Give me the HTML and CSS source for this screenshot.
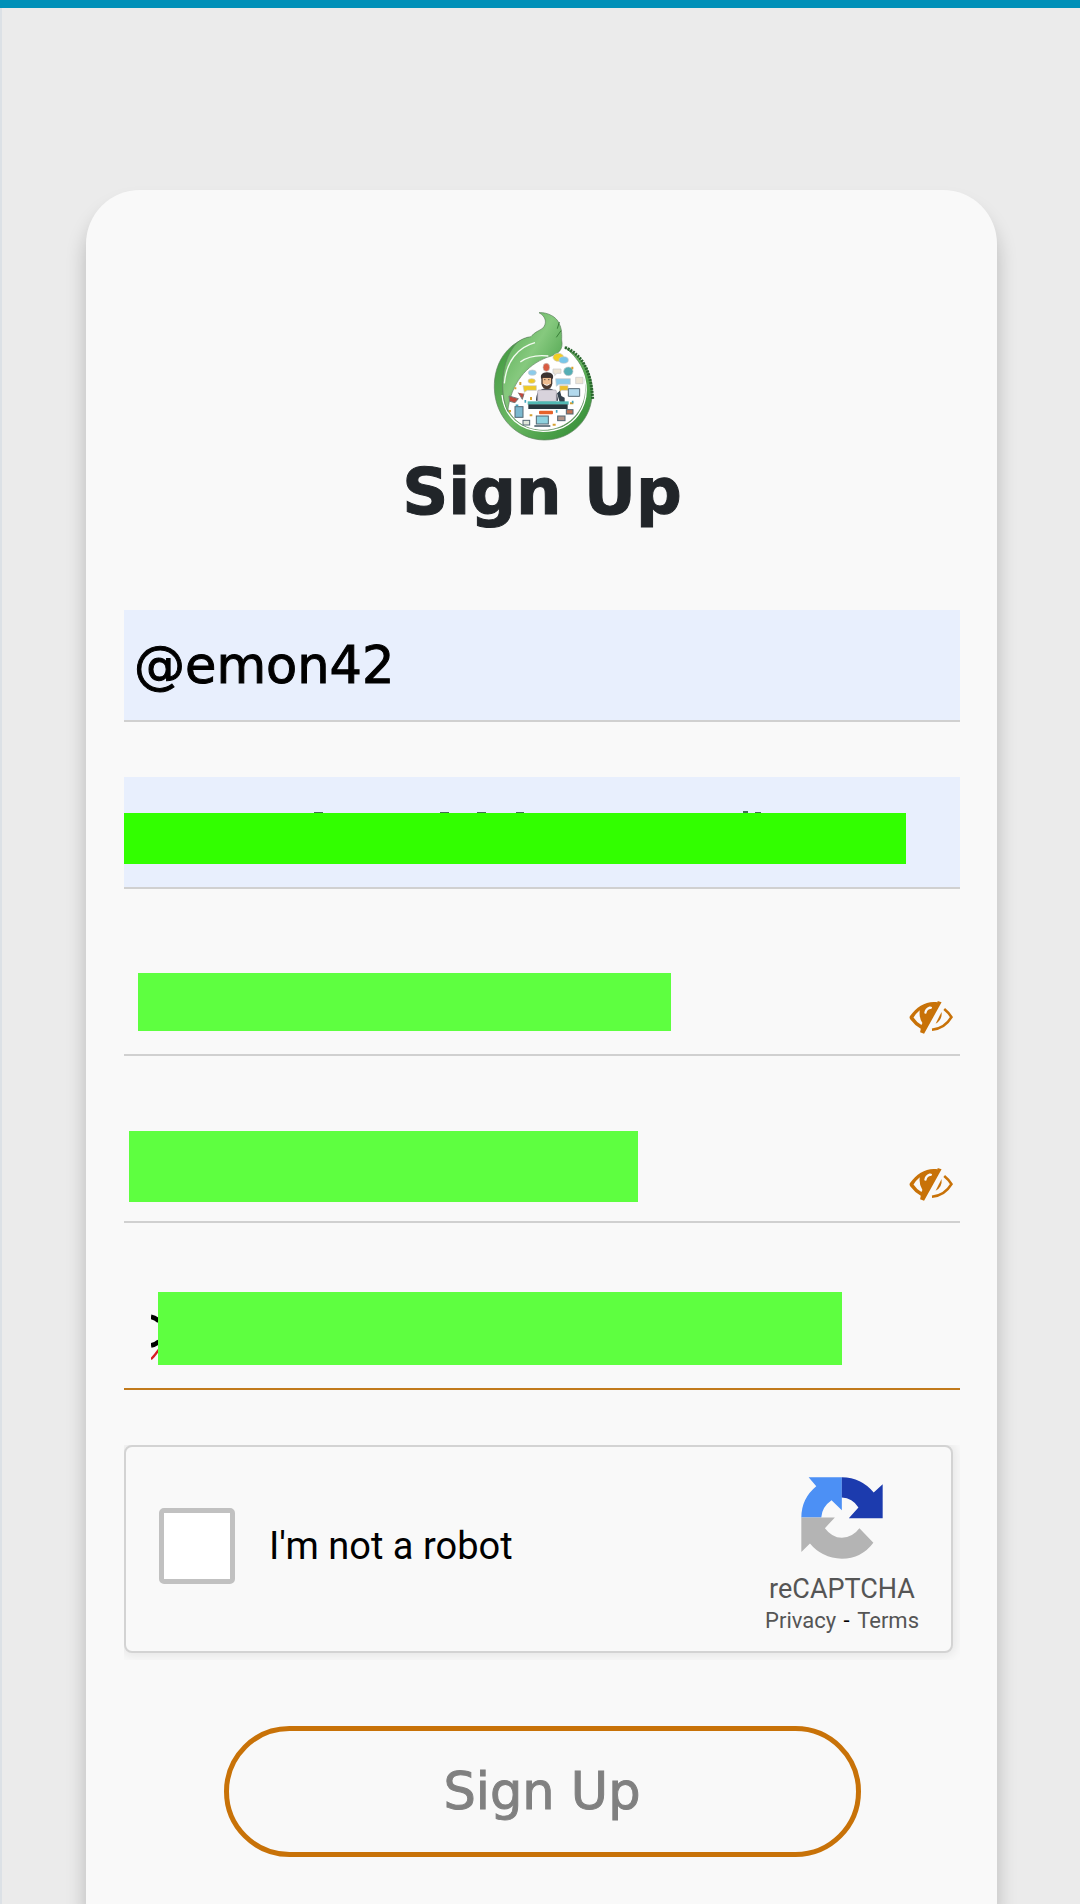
FILE: index.html
```html
<!DOCTYPE html>
<html lang="en">
<head>
  <meta charset="UTF-8">
  <meta name="viewport" content="width=device-width, initial-scale=1.0">
  <title>Sign Up</title>
  <link rel="stylesheet" href="styles.css">
</head>
<body>
  <main class="page">
    <form class="card">
      <svg class="logo" viewBox="-8 0 390 450" role="img" aria-label="Logo">
        <defs>
          <linearGradient id="leaf" x1="0" y1="0" x2="1" y2="1">
            <stop offset="0" stop-color="#4fa64c"/>
            <stop offset="0.45" stop-color="#86c97e"/>
            <stop offset="1" stop-color="#2f8f33"/>
          </linearGradient>
          <linearGradient id="ring" x1="0" y1="0" x2="1" y2="1">
            <stop offset="0" stop-color="#3d963c"/>
            <stop offset="0.5" stop-color="#6cb864"/>
            <stop offset="1" stop-color="#2a862e"/>
          </linearGradient>
        </defs>
        <circle cx="194" cy="270" r="140" fill="#fff"/>
        <path d="M148 112C82 130 42 190 44 264C46 350 110 419 194 420C278 420 338 356 338 274C338 216 306 166 255 142C298 174 318 214 318 264C318 334 264 391 190 391C116 390 70 336 70 264C68 202 92 150 148 112Z" fill="url(#ring)" stroke="#5d805d" stroke-width="2"/>
        <path d="M252 150C320 190 340 280 296 344C270 380 230 394 190 394C120 391 74 350 67 285" fill="none" stroke="#fff" stroke-width="4"/>
        <path d="M178 38C204 36 232 52 238 70C248 88 246 108 246 120C252 150 236 164 202 172C140 196 94 250 84 334C60 280 62 180 112 128C124 118 138 112 154 110C164 96 180 92 190 84C202 70 200 50 178 38Z" fill="url(#leaf)" stroke="#5d805d" stroke-width="2"/>
        <path d="M166 128C114 142 80 184 74 250M206 168C170 164 146 168 122 186" fill="none" stroke="#f2faef" stroke-width="4"/>
        <path d="M239 66L233 86M244 92L230 112" stroke="#397e38" stroke-width="3"/>
        <path d="M256 142C306 164 334 208 339 298" fill="none" stroke="#29672d" stroke-width="9" stroke-dasharray="6 3"/>
        <!-- chat bubbles -->
        <g stroke="#c8c8c8" stroke-width="2">
          <ellipse cx="236" cy="172" rx="16" ry="12" fill="#f3cf22"/>
          <ellipse cx="252" cy="180" rx="14" ry="10" fill="#79c6e8"/>
          <ellipse cx="200" cy="202" rx="10" ry="12" fill="#d95b42"/>
          <ellipse cx="158" cy="218" rx="12" ry="8" fill="#8ccbea"/>
          <ellipse cx="156" cy="243" rx="11" ry="7" fill="#f0ca26"/>
          <ellipse cx="266" cy="214" rx="14" ry="13" fill="#55aeb5"/>
          <path d="M220 207h24v13h-12l-7 7v-7h-5zM288 232h22v19h-22z" fill="#eee5d5"/>
          <path d="M228 236h44v17h-34l-8 6z" fill="#8ccbea"/>
          <path d="M130 257h40v14h-27l-9 6z" fill="#f0ca26"/>
          <path d="M240 257h25v14h-20l-5 5z" fill="#edc02b"/>
        </g>
        <!-- gadgets -->
        <g stroke="#536773" stroke-width="3">
          <rect x="106" y="320" width="24" height="32" fill="#7bb8cf"/>
          <rect x="170" y="348" width="36" height="24" fill="#8fd2df"/>
          <path d="M164 378h48" stroke-width="5"/>
          <rect x="130" y="361" width="20" height="14" fill="#dfe7da"/>
          <rect x="234" y="348" width="22" height="14" fill="#b29387"/>
          <rect x="260" y="329" width="20" height="13" fill="#c07153"/>
          <path d="M266 266h34v23h-34z" fill="#b2d9ed"/>
        </g>
        <path d="M88 288l28 8-10 12-16-4zM116 278l12 20 5-17" fill="#c0483b" stroke="#777" stroke-width="3"/>
        <rect x="178" y="332" width="42" height="11" rx="3" fill="#e6632b"/>
        <path d="M122 246v9M107 262v6M271 310h10M150 346h8M219 374h9M91 330v7M278 200v8M154 291v9" stroke="#d4a130" stroke-width="6"/>
        <path d="M137 300v8M279 302v8M231 330v8M108 316h8" stroke="#45a3bd" stroke-width="5"/>
        <!-- man at the desk -->
        <path d="M169 302C170 278 178 266 202 265C226 266 233 278 235 302Z" fill="#2e3545"/>
        <path d="M185 225h33v26q-3 15-16 17q-14-2-17-17z" fill="#4b3930"/>
        <path d="M189 234h25v17q-12 8-25 0z" fill="#eebd91"/>
        <path d="M184 237q-4-20 18-20t18 20l-8-6h-22z" fill="#3b3331"/>
        <path d="M194 253q8 6 15 0" fill="none" stroke="#fff" stroke-width="3"/>
        <path d="M194 239h3M206 239h3" stroke="#2c2929" stroke-width="3"/>
        <rect x="174" y="270" width="56" height="35" rx="4" fill="#d8d3dc" stroke="#aaa6b0" stroke-width="2"/>
        <path d="M232 280l9-8 4 16 10 5v13h-15z" fill="#33414d"/>
        <rect x="144" y="304" width="123" height="10" fill="#52b9b4"/>
        <rect x="146" y="313" width="118" height="14" fill="#27373e"/>
      </svg>
      <h1 class="title">Sign Up</h1>

      <div class="field">
        <input class="filled" type="text" value="@emon42" aria-label="Username">
      </div>
      <div class="field">
        <input class="filled" type="email" aria-label="Email">
        <svg class="specks" viewBox="0 0 640 4" aria-hidden="true">
          <path d="M190 2h9M316 2h9M353 2h9M392 2h8M619 1h5M631 2h6" stroke="#456b55" stroke-width="2"/>
        </svg>
        <span class="mask mask-email"></span>
      </div>
      <div class="field">
        <input type="password" aria-label="Password">
        <span class="mask mask-password"></span>
        <button class="eye" type="button" aria-label="Show password">
          <svg viewBox="0 0 132 100">
            <path d="M86 4C55-2 23 16 3 45Q-1 50 3 55Q17 74 35 84L33 95L45 99L98 4L86 0ZM32 28Q29 50 40 67L37 73Q23 65 13 50Q20 38 32 28ZM61 17Q48 22 46 34Q45 39 49 39Q53 39 53 34Q55 25 65 24Q70 23 69 19Q67 16 61 17Z" fill="#c87208" fill-rule="evenodd"/>
            <path d="M106 24Q120 35 128 49Q107 84 69 87" fill="none" stroke="#c87208" stroke-width="8"/>
            <path d="M98 33Q101 57 80 69Z" fill="#c87208"/>
          </svg>
        </button>
      </div>
      <div class="field">
        <input type="password" aria-label="Confirm password">
        <span class="mask mask-confirm"></span>
        <button class="eye" type="button" aria-label="Show confirm password">
          <svg viewBox="0 0 132 100">
            <path d="M86 4C55-2 23 16 3 45Q-1 50 3 55Q17 74 35 84L33 95L45 99L98 4L86 0ZM32 28Q29 50 40 67L37 73Q23 65 13 50Q20 38 32 28ZM61 17Q48 22 46 34Q45 39 49 39Q53 39 53 34Q55 25 65 24Q70 23 69 19Q67 16 61 17Z" fill="#c87208" fill-rule="evenodd"/>
            <path d="M106 24Q120 35 128 49Q107 84 69 87" fill="none" stroke="#c87208" stroke-width="8"/>
            <path d="M98 33Q101 57 80 69Z" fill="#c87208"/>
          </svg>
        </button>
      </div>
      <div class="field">
        <input class="active" type="text" aria-label="Reference">
        <svg class="stroke-end" viewBox="0 0 24 140" aria-hidden="true">
          <path d="M0 8Q13 10 24 21M0 94Q14 91 24 82" fill="none" stroke="#000" stroke-width="14"/>
          <path d="M0 135Q10 126 24 106" fill="none" stroke="#d51c24" stroke-width="7"/>
        </svg>
        <span class="mask mask-reference"></span>
      </div>

      <div class="captcha-frame">
        <div class="captcha">
          <label class="robot">
            <input type="checkbox">
            <span>I'm not a robot</span>
          </label>
          <div class="brand">
            <svg class="captcha-logo" viewBox="190 145 245 247" aria-hidden="true">
              <path d="M190 267Q190 210 235 173L212 146H312V245L281 215Q252 235 250 267Z" fill="#4c90f5"/>
              <path d="M312 146Q371 147 408 192L435 167V269H333L362 237Q344 208 312 207Z" fill="#1c3bae"/>
              <path d="M190 267H291L261 299Q282 327 312 328Q345 326 365 299L407 343Q371 391 312 391Q251 388 216 345L190 371Z" fill="#b4b4b4"/>
            </svg>
            <span class="brand-name">reCAPTCHA</span>
            <span class="links"><a href="#">Privacy</a> - <a href="#">Terms</a></span>
          </div>
        </div>
      </div>

      <button class="submit" type="submit" disabled>Sign Up</button>
    </form>
  </main>
</body>
</html>
```
FILE: styles.css
```css
* {
  box-sizing: border-box;
}
body {
  margin: 0;
  font-family: "DejaVu Sans", sans-serif;
  background-color: #ebebeb;
}
.page {
  display: flex;
  min-height: 100vh;
  padding: 182px 83px 0 84px;
  border-top: 8px solid #0090b8;
  box-shadow: inset 2px 0 #dce1e6;
  overflow: hidden;
}
.card {
  display: flex;
  flex-direction: column;
  align-items: center;
  flex: 1;
  min-width: 0;
  margin-left: 2px;
  padding: 110px 37px 40px 38px;
  background-color: #f9f9f9;
  border-radius: 54px 54px 0 0;
  box-shadow: 0 16px 20px rgba(0, 0, 0, 0.22);
}
.logo {
  width: 130px;
  height: 150px;
}
.title {
  margin: 0 0 76px;
  color: #212529;
  font-size: 64px;
  font-weight: bold;
  line-height: 84px;
  -webkit-text-stroke: 1px #212529;
}
.field {
  position: relative;
  width: 100%;
  margin-bottom: 55px;
}
.field input {
  display: block;
  width: 100%;
  height: 112px;
  padding: 0 10px;
  border: none;
  border-bottom: 2px solid #d0d0d0;
  background-color: transparent;
  color: #000;
  font-family: inherit;
  font-size: 51px;
  outline: none;
}
.field input.filled {
  background-color: #e8effd;
  -webkit-text-stroke: 1px #000;
}
.field input.active {
  border-color: #c17a1c;
}
/* covers for the private values */
.mask {
  position: absolute;
  background-color: #5eff40;
}
.mask-email {
  top: 36px;
  left: 0;
  width: 782px;
  height: 51px;
  background-color: #32ff00;
}
.mask-password {
  top: 29px;
  left: 14px;
  width: 533px;
  height: 58px;
}
.mask-confirm {
  top: 20px;
  left: 5px;
  width: 509px;
  height: 71px;
}
.mask-reference {
  top: 14px;
  left: 34px;
  width: 684px;
  height: 73px;
}
.specks {
  position: absolute;
  top: 34px;
  left: 0;
  width: 640px;
  height: 4px;
}
.stroke-end {
  position: absolute;
  top: 36px;
  left: 27px;
  width: 8px;
  height: 47px;
}
.eye {
  position: absolute;
  right: 7px;
  bottom: 22px;
  width: 44px;
  height: 33px;
  padding: 0;
  border: none;
  background: none;
}
.eye svg {
  display: block;
  width: 44px;
  height: 33px;
}
.captcha-frame {
  width: 100%;
  padding: 0 7px 7px 0;
  overflow: hidden;
}
.captcha {
  display: flex;
  align-items: center;
  justify-content: space-between;
  height: 208px;
  padding: 0 30px 0 33px;
  border: 2px solid #d3d3d3;
  border-radius: 8px;
  background-color: #f9f9f9;
  box-shadow: 0 0 11px 3px rgba(0, 0, 0, 0.08);
  font-family: Roboto, sans-serif;
}
.robot {
  display: flex;
  align-items: center;
  gap: 34px;
  margin-bottom: 6px;
  color: #000;
  font-size: 38px;
}
.robot input {
  appearance: none;
  width: 76px;
  height: 76px;
  margin: 0;
  border: 5px solid #c1c1c1;
  border-radius: 5px;
  background-color: #fff;
}
.brand {
  display: flex;
  flex-direction: column;
  align-items: center;
  padding-top: 16px;
  color: #555;
}
.captcha-logo {
  width: 82px;
  height: 82px;
  margin-bottom: 14px;
}
.brand-name {
  font-size: 27px;
  line-height: 32px;
}
.links {
  color: #000;
  font-size: 22px;
  line-height: 32px;
}
.links a {
  margin: 0 2px;
  color: #555;
  text-decoration: none;
}
.submit {
  width: 637px;
  max-width: 100%;
  height: 131px;
  margin-top: 66px;
  border: 5px solid #c87208;
  border-radius: 66px;
  background-color: transparent;
  color: #808080;
  font-family: inherit;
  font-size: 51px;
  -webkit-text-stroke: 1px #808080;
}
```
